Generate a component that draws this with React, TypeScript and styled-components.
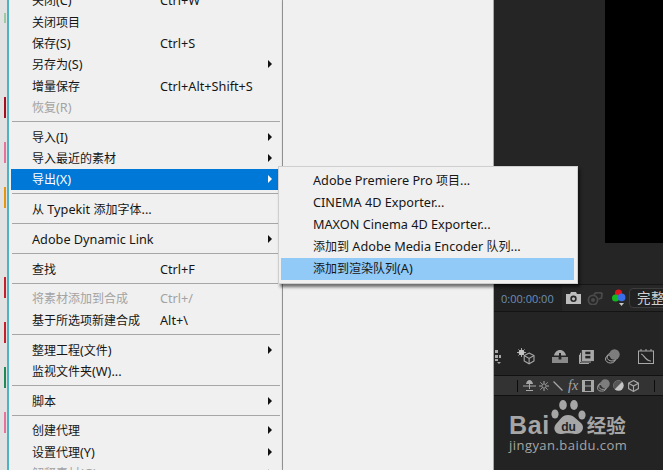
import React from 'react'
import styled, { createGlobalStyle } from 'styled-components'

const Global = createGlobalStyle`
  html, body { margin: 0; padding: 0; background: #252525; }
  * { box-sizing: border-box; }
`

const Screen = styled.div`
  position: relative;
  display: flex;
  width: 663px;
  height: 470px;
  overflow: hidden;
  font-family: 'Noto Sans', 'Noto Sans CJK SC', sans-serif;
  font-size: 12px;
`

const LabelStrip = styled.div`
  display: flex;
  flex-direction: column;
  align-items: flex-end;
  gap: 24px;
  width: 9px;
  flex: none;
  padding: 13px 1px 0 0;
  background: #e2e2e2;
  border-right: 2px solid #4db3c4;
`

const LabelMark = styled.div<{ $color: string; $h: number }>`
  width: 2px;
  height: ${({ $h }) => $h}px;
  flex: none;
  background: ${({ $color }) => $color};
`

const Menu = styled.div`
  width: 274px;
  height: 500px;
  flex: none;
  margin-top: -10.3px;
  padding: 0 2px;
  background: #f0f0f0;
  border-right: 1px solid #a0a0a0;
`

const Row = styled.div<{ $active?: boolean; $disabled?: boolean }>`
  display: grid;
  grid-template-columns: 128px 1fr 12px;
  align-items: center;
  height: 21.3px;
  padding-left: 21px;
  white-space: nowrap;
  background: ${({ $active }) => ($active ? '#0078d7' : 'transparent')};
  color: ${({ $active, $disabled }) => ($active ? '#fff' : $disabled ? '#a3a3a3' : '#161616')};
`

const Arrow = styled.span<{ $color: string }>`
  width: 0;
  height: 0;
  border-left: 4px solid ${({ $color }) => $color};
  border-top: 4px solid transparent;
  border-bottom: 4px solid transparent;
`

const Separator = styled.div`
  height: 8.5px;
  padding: 3.5px 0 0 1px;

  &::after {
    content: '';
    display: block;
    height: 1px;
    background: #a6a6a6;
  }
`

const LatinRun = styled.span`
  font-size: 12.7px;
`

const SidePanel = styled.div`
  width: 211px;
  flex: none;
  background: #f0f0f0;
  border-right: 1px solid #a8a8a8;
  box-shadow: 1px 0 3px rgba(0, 0, 0, 0.6);
`

const SubMenu = styled.div`
  position: absolute;
  left: 278px;
  top: 166px;
  width: 300px;
  padding: 3px 3px 3px 2px;
  background: #f0f0f0;
  border: 1px solid #cfcfcf;
  box-shadow: 2px 3px 3px rgba(0, 0, 0, 0.55);
`

const SubRow = styled.div<{ $active?: boolean }>`
  height: 22px;
  line-height: 20px;
  padding-left: 32px;
  white-space: nowrap;
  color: #161616;
  background: ${({ $active }) => ($active ? '#91c9f7' : 'transparent')};
`

const Dark = styled.div`
  width: 169px;
  flex: none;
  display: flex;
  flex-direction: column;
  background: #252525;
`

const ViewerArea = styled.div`
  display: flex;
  justify-content: flex-end;
  height: 285px;
  flex: none;
  border-bottom: 1px solid #161616;
`

const Viewer = styled.div`
  width: 58px;
  height: 243px;
  background: #000;
`

const TimeBar = styled.div`
  display: flex;
  align-items: center;
  height: 27px;
  flex: none;
  overflow: hidden;
  background: #272727;
  border-bottom: 1px solid #141414;
`

const TimeBox = styled.div`
  display: flex;
  align-items: center;
  width: 68px;
  height: 100%;
  flex: none;
  padding-left: 7px;
  background: #212121;
  color: #6d8fb4;
  font-family: 'Open Sans', sans-serif;
  font-size: 11px;
`

const QualityBox = styled.div`
  margin-left: 3px;
  width: 50px;
  height: 20px;
  flex: none;
  padding-left: 7px;
  border: 1px solid #3d3d3d;
  border-radius: 4px;
  background: #212121;
  color: #d0d0d0;
  font-family: 'Noto Sans CJK SC', sans-serif;
  font-size: 13.5px;
  line-height: 17px;
  letter-spacing: 0.5px;
  white-space: nowrap;
`

const ToolPanel = styled.div`
  display: flex;
  align-items: center;
  height: 64px;
  flex: none;
  padding-top: 26px;
  background: #242424;
  border-bottom: 1px solid #111;
`

const SwitchBar = styled.div`
  display: flex;
  align-items: center;
  height: 20px;
  flex: none;
  background: #333;
  border-bottom: 1px solid #111;
`

const Glyph = styled.svg<{ $ml: number }>`
  display: block;
  flex: none;
  margin-left: ${({ $ml }) => $ml}px;
`

const BarDivider = styled.div<{ $ml: number }>`
  width: 1px;
  height: 12px;
  flex: none;
  margin-left: ${({ $ml }) => $ml}px;
  background: #0c0c0c;
`

const FxLabel = styled.span`
  flex: none;
  width: 12px;
  margin-left: 5px;
  color: #a8a8a8;
  font-family: 'Liberation Serif', serif;
  font-size: 14px;
  font-style: italic;
  line-height: 14px;
`

const Bottom = styled.div`
  flex: 1;
  background: #232323;
`

const Watermark = styled.div`
  position: absolute;
  left: 509px;
  top: 399px;
  width: 125px;
  color: #a6a6a6;
`

const LogoLine = styled.div`
  display: flex;
  align-items: flex-end;
  height: 38px;
`

const LogoWord = styled.span`
  font-family: 'Liberation Sans', sans-serif;
  font-size: 25px;
  font-weight: 700;
  line-height: 24px;
  letter-spacing: 0.6px;
`

const LogoCn = styled.span`
  font-family: 'Noto Sans CJK SC', sans-serif;
  font-size: 19.5px;
  font-weight: 700;
  line-height: 24px;
  white-space: nowrap;
`

const Domain = styled.div`
  margin-top: 0;
  font-family: 'Open Sans', sans-serif;
  font-size: 13px;
  line-height: 16px;
  letter-spacing: 0.45px;
  white-space: nowrap;
`

type Item =
  | { sep: true }
  | { label: string; key?: string; sub?: boolean; disabled?: boolean; active?: boolean }

const items: Item[] = [
  { label: '关闭(C)', key: 'Ctrl+W' },
  { label: '关闭项目' },
  { label: '保存(S)', key: 'Ctrl+S' },
  { label: '另存为(S)', sub: true },
  { label: '增量保存', key: 'Ctrl+Alt+Shift+S' },
  { label: '恢复(R)', disabled: true },
  { sep: true },
  { label: '导入(I)', sub: true },
  { label: '导入最近的素材', sub: true },
  { label: '导出(X)', sub: true, active: true },
  { sep: true },
  { label: '从 Typekit 添加字体...' },
  { sep: true },
  { label: 'Adobe Dynamic Link', sub: true },
  { sep: true },
  { label: '查找', key: 'Ctrl+F' },
  { sep: true },
  { label: '将素材添加到合成', key: 'Ctrl+/', disabled: true },
  { label: '基于所选项新建合成', key: 'Alt+\\' },
  { sep: true },
  { label: '整理工程(文件)', sub: true },
  { label: '监视文件夹(W)...' },
  { sep: true },
  { label: '脚本', sub: true },
  { sep: true },
  { label: '创建代理', sub: true },
  { label: '设置代理(Y)', sub: true },
  { label: '解释素材(G)', sub: true, disabled: true },
]

const marks = [
  { color: '#9ccaa2', h: 10 },
  { color: 'transparent', h: 26 },
  { color: '#a30f1f', h: 21 },
  { color: '#e4749c', h: 21 },
  { color: '#e2950f', h: 21 },
  { color: 'transparent', h: 21 },
  { color: '#c1202c', h: 21 },
  { color: '#c1202c', h: 21 },
  { color: '#1f8a58', h: 21 },
  { color: '#e4749c', h: 21 },
  { color: 'transparent', h: 11 },
  { color: '#c1202c', h: 21 },
]

const subItems = [
  'Adobe Premiere Pro 项目...',
  'CINEMA 4D Exporter...',
  'MAXON Cinema 4D Exporter...',
  '添加到 Adobe Media Encoder 队列...',
]

const ICON = '#a8a8a8'

// latin runs sit a little larger than the 12px han text, as in the original UI font
const Mixed = ({ text }: { text: string }) => (
  <span>
    {(text.match(/[\u4e00-\u9fff]+|[^\u4e00-\u9fff]+/g) ?? []).map((run, i) =>
      /[\u4e00-\u9fff]/.test(run) ? run : <LatinRun key={i}>{run}</LatinRun>,
    )}
  </span>
)

const CubeShape = ({ x = 0, y = 0, s = 1 }: { x?: number; y?: number; s?: number }) => (
  <g transform={`translate(${x} ${y}) scale(${s})`} fill="none" stroke={ICON} strokeWidth={1.1}>
    <path d="M5.5 .6 10.4 3.2V8.6L5.5 11.4 .6 8.6V3.2Z" />
    <path d="M.6 3.2 5.5 6 10.4 3.2M5.5 6V11.4" />
  </g>
)

const FilmShape = ({ w, h }: { w: number; h: number }) => (
  <g fill="none" stroke={ICON}>
    <rect x={w * 0.22} y={0.5} width={w * 0.74} height={h * 0.72} fill={ICON} />
    <rect x={w * 0.42} y={h * 0.12} width={w * 0.34} height={h * 0.18} fill="#242424" stroke="none" />
    <rect x={w * 0.42} y={h * 0.42} width={w * 0.34} height={h * 0.18} fill="#242424" stroke="none" />
    <path d={`M${w * 0.1} ${h * 0.2}V${h * 0.86}H${w * 0.8}M.5 ${h * 0.34}V${h - 0.5}H${w * 0.66}`} />
  </g>
)

const LayerShape = () => (
  <g>
    <ellipse cx="5.5" cy="10" rx="5" ry="4" fill="none" stroke={ICON} />
    <ellipse cx="7" cy="8" rx="5" ry="4" fill="none" stroke={ICON} />
    <circle cx="9.5" cy="5.5" r="5.2" fill="#7d7d7d" />
  </g>
)

export default function App() {
  return (
    <Screen>
      <Global />
      <LabelStrip>
        {marks.map((m, i) => (
          <LabelMark key={i} $color={m.color} $h={m.h} />
        ))}
      </LabelStrip>

      <Menu>
        {items.map((item, i) =>
          'sep' in item ? (
            <Separator key={i} />
          ) : (
            <Row key={i} $active={item.active} $disabled={item.disabled}>
              <Mixed text={item.label} />
              <Mixed text={item.key ?? ''} />
              {item.sub ? (
                <Arrow $color={item.active ? '#fff' : item.disabled ? '#a3a3a3' : '#111'} />
              ) : (
                <span />
              )}
            </Row>
          ),
        )}
      </Menu>

      <SidePanel />

      <SubMenu>
        {subItems.map((s) => (
          <SubRow key={s}>
            <Mixed text={s} />
          </SubRow>
        ))}
        <SubRow $active>
          <Mixed text="添加到渲染队列(A)" />
        </SubRow>
      </SubMenu>

      <Dark>
        <ViewerArea>
          <Viewer />
        </ViewerArea>

        <TimeBar>
          <TimeBox>0:00:00:00</TimeBox>
          <Glyph $ml={4} width="15" height="12" viewBox="0 0 15 12">
            <path d="M0 2H4L5 0H10L11 2H15V12H0Z" fill="#bdbdbd" />
            <circle cx="7.5" cy="6.8" r="3.2" fill="#272727" />
            <circle cx="7.5" cy="6.8" r="1.6" fill="#bdbdbd" />
          </Glyph>
          <Glyph $ml={6} width="16" height="13" viewBox="0 0 16 13">
            <circle cx="6" cy="8" r="4.6" fill="none" stroke="#4a4a4a" strokeWidth="1.8" />
            <circle cx="6" cy="8" r="2" fill="#4a4a4a" />
            <path d="M7 2.6C8 .6 13 -.4 15 1.6L14.5 6 11.5 7" fill="none" stroke="#4a4a4a" strokeWidth="1.8" />
          </Glyph>
          <Glyph $ml={9} width="14" height="18" viewBox="0 0 14 18">
            <circle cx="6.5" cy="4" r="3.6" fill="#e0141c" />
            <circle cx="3.6" cy="9" r="3.6" fill="#14b81e" />
            <circle cx="9.6" cy="8.4" r="3.8" fill="#3a6ee8" />
            <path d="M7 14H12L9.5 17Z" fill="#c8c8c8" />
          </Glyph>
          <QualityBox>完整</QualityBox>
        </TimeBar>

        <ToolPanel>
          <Glyph $ml={1} width="6" height="14" viewBox="0 0 6 14">
            <path d="M0 0H3V3H0ZM0 5H3V8H0ZM4 5H6V8H4ZM0 9H3V11H0ZM2 12H6L4 14Z" fill={ICON} />
          </Glyph>
          <Glyph $ml={16} width="18" height="17" viewBox="0 0 18 17">
            <circle cx="4.5" cy="4.5" r="2.8" fill="#c4c4c4" />
            <path d="M4.5 0V9M0 4.5H9M1.4 1.4 7.6 7.6M7.6 1.4 1.4 7.6" stroke="#c4c4c4" strokeWidth=".8" />
            <CubeShape x={6.6} y={4.4} />
          </Glyph>
          <Glyph $ml={17} width="16" height="13" viewBox="0 0 16 13">
            <path d="M2 5.4C3 1.6 5.6 0 8 0S13 1.6 14 5.4Z" fill={ICON} />
            <path d="M7 3H9V7H7Z" fill="#242424" />
            <path d="M0 7H6.6V9.5H9.4V7H16V13H0Z" fill="#8a8a8a" />
          </Glyph>
          <Glyph $ml={11} width="15" height="14" viewBox="0 0 15 14">
            <FilmShape w={15} h={14} />
          </Glyph>
          <Glyph $ml={11} width="15" height="15" viewBox="0 0 15 15">
            <LayerShape />
          </Glyph>
          <Glyph $ml={18} width="16" height="15" viewBox="0 0 16 15">
            <rect x=".5" y="2" width="15" height="12.5" fill="none" stroke={ICON} />
            <path d="M3 0V2M8 0V2M13 0V2" stroke={ICON} />
            <path d="M3 5C6 5 7 12 13 12" fill="none" stroke={ICON} strokeWidth="1.2" />
          </Glyph>
        </ToolPanel>

        <SwitchBar>
          <BarDivider $ml={23} />
          <Glyph $ml={5} width="13" height="11" viewBox="0 0 13 11">
            <path d="M3 4C3.5 1.4 5 0 6.5 0S9.5 1.4 10 4Z" fill={ICON} />
            <path d="M0 6H13" stroke={ICON} />
            <path d="M6.5 1V9M3 10.5H10" stroke={ICON} />
          </Glyph>
          <Glyph $ml={3} width="10" height="10" viewBox="0 0 10 10">
            <circle cx="5" cy="5" r="2.2" fill="none" stroke={ICON} />
            <path d="M5 0V2M5 8V10M0 5H2M8 5H10M1.4 1.4 2.8 2.8M7.2 7.2 8.6 8.6M8.6 1.4 7.2 2.8M2.8 7.2 1.4 8.6" stroke={ICON} />
          </Glyph>
          <Glyph $ml={4} width="10" height="10" viewBox="0 0 10 10">
            <path d="M.5 .5 9.5 9.5" stroke={ICON} strokeWidth="1.2" />
          </Glyph>
          <FxLabel>fx</FxLabel>
          <Glyph $ml={2} width="12" height="12" viewBox="0 0 12 12">
            <rect x=".5" y=".5" width="11" height="11" fill="none" stroke={ICON} />
            <path d="M1 1H3V11H1ZM9 1H11V11H9ZM3 5.5H9V6.5H3Z" fill={ICON} />
          </Glyph>
          <Glyph $ml={3} width="13" height="13" viewBox="0 0 15 15">
            <LayerShape />
          </Glyph>
          <Glyph $ml={3} width="11" height="11" viewBox="0 0 11 11">
            <circle cx="5.5" cy="5.5" r="5.2" fill="#c4c4c4" />
            <path d="M9.2 1.8A5.2 5.2 0 0 0 1.8 9.2Z" fill="#555" />
          </Glyph>
          <Glyph $ml={4} width="11" height="12" viewBox="0 0 11 12">
            <CubeShape />
          </Glyph>
          <BarDivider $ml={15} />
        </SwitchBar>

        <Bottom />
      </Dark>

      <Watermark>
        <LogoLine>
          <LogoWord>Bai</LogoWord>
          <Glyph $ml={0} width="37" height="38" viewBox="0 1 37 38">
            <g fill="#a6a6a6">
              <ellipse cx="5" cy="16" rx="3.6" ry="4.6" />
              <ellipse cx="13" cy="7" rx="3.8" ry="5" />
              <ellipse cx="24" cy="7" rx="3.8" ry="5" />
              <ellipse cx="32" cy="17" rx="3.6" ry="4.6" />
              <path d="M18 17C24 17 27 22 31 25 36 30 31 37 25 36 21 35 15 35 12 36 6 37 2 31 6 26 10 22 12 17 18 17Z" />
            </g>
            <text x="18.5" y="33" textAnchor="middle" fill="#242424" fontFamily="Liberation Sans, sans-serif" fontSize="12" fontWeight="700">
              du
            </text>
          </Glyph>
          <LogoCn>经验</LogoCn>
        </LogoLine>
        <Domain>jingyan.baidu.com</Domain>
      </Watermark>
    </Screen>
  )
}
